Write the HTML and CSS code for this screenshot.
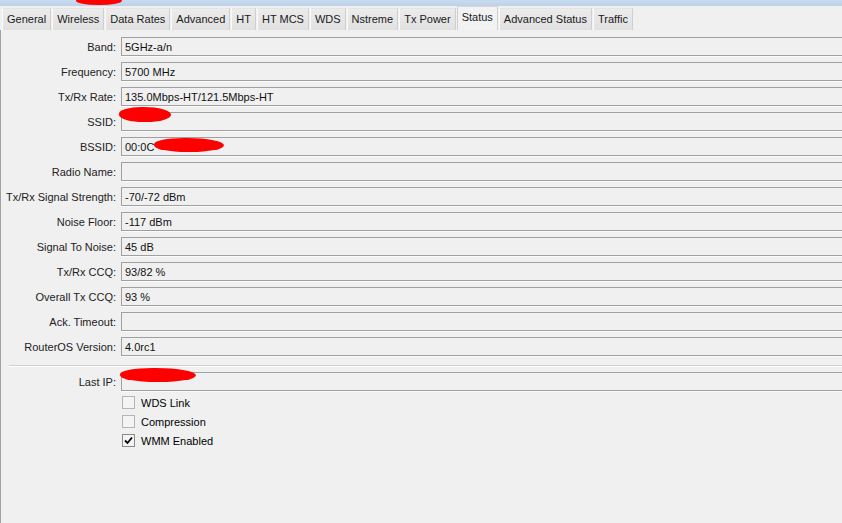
FILE: index.html
```html
<!DOCTYPE html>
<html>
<head>
<meta charset="utf-8">
<link rel="stylesheet" href="styles.css">
</head>
<body>
<div class="topstrip"><span class="blot blot-top"></span></div>
<div class="tabs">
  <div class="tab">General</div>
  <div class="tab">Wireless</div>
  <div class="tab">Data Rates</div>
  <div class="tab">Advanced</div>
  <div class="tab">HT</div>
  <div class="tab">HT MCS</div>
  <div class="tab">WDS</div>
  <div class="tab">Nstreme</div>
  <div class="tab">Tx Power</div>
  <div class="tab active">Status</div>
  <div class="tab">Advanced Status</div>
  <div class="tab">Traffic</div>
</div>
<div class="panel">
  <div class="row"><div class="label">Band:</div><div class="field">5GHz-a/n</div></div>
  <div class="row"><div class="label">Frequency:</div><div class="field">5700 MHz</div></div>
  <div class="row"><div class="label">Tx/Rx Rate:</div><div class="field">135.0Mbps-HT/121.5Mbps-HT</div></div>
  <div class="row"><div class="label">SSID:</div><div class="field"><span class="blot blot-ssid"></span></div></div>
  <div class="row"><div class="label">BSSID:</div><div class="field">00:0C<span class="blot blot-bssid"></span></div></div>
  <div class="row"><div class="label">Radio Name:</div><div class="field"></div></div>
  <div class="row"><div class="label">Tx/Rx Signal Strength:</div><div class="field">-70/-72 dBm</div></div>
  <div class="row"><div class="label">Noise Floor:</div><div class="field">-117 dBm</div></div>
  <div class="row"><div class="label">Signal To Noise:</div><div class="field">45 dB</div></div>
  <div class="row"><div class="label">Tx/Rx CCQ:</div><div class="field">93/82 %</div></div>
  <div class="row"><div class="label">Overall Tx CCQ:</div><div class="field">93 %</div></div>
  <div class="row"><div class="label">Ack. Timeout:</div><div class="field"></div></div>
  <div class="row"><div class="label">RouterOS Version:</div><div class="field">4.0rc1</div></div>
  <div class="separator"></div>
  <div class="row"><div class="label">Last IP:</div><div class="field"><span class="blot blot-ip"></span></div></div>
  <div class="checks">
    <div class="check"><span class="box"></span><span>WDS Link</span></div>
    <div class="check"><span class="box"></span><span>Compression</span></div>
    <div class="check"><span class="box checked"><svg width="9" height="9" viewBox="0 0 9 9"><path d="M1 4.5 L3.5 7 L8 1.5" fill="none" stroke="#000" stroke-width="1.8"/></svg></span><span>WMM Enabled</span></div>
  </div>
</div>
</body>
</html>
```
FILE: styles.css
```css
html, body {
  margin: 0;
  padding: 0;
  height: 100%;
}
body {
  background: #f0f0f0;
  font-family: "Liberation Sans", Arial, sans-serif;
  font-size: 11px;
  color: #000;
  overflow: hidden;
}
.topstrip {
  height: 6px;
  background: linear-gradient(#c9dbee, #bcd2ea);
  position: relative;
}
.blot {
  position: absolute;
  background: #f00;
  border-radius: 45% 55% 50% 50%;
  filter: blur(0.5px);
}
.blot-top {
  left: 76px;
  top: -4px;
  width: 46px;
  height: 9px;
}
.tabs {
  display: flex;
  gap: 1px;
  padding-left: 2px;
  height: 24px;
  background: #f0f0f0;
  align-items: flex-end;
}
.tab {
  height: 21px;
  line-height: 21px;
  padding: 0 4px;
  background: linear-gradient(#ebebeb, #e1e1e1);
  border-left: 1px solid #fafafa;
  border-right: 1px solid #cfcfcf;
  border-top: 1px solid #e4e4e4;
  color: #1a1a1a;
  white-space: nowrap;
}
.active {
  height: 24px;
  line-height: 21px;
  background: #f2f2f2;
  border-left: 1px solid #d0d0d0;
  border-right: 1px solid #d0d0d0;
  border-top: 1px solid #d8d8d8;
  padding: 0 4px 3px;
  box-sizing: border-box;
}
.panel {
  border-left: 1px solid #a0a0a0;
  padding-top: 7px;
  height: 500px;
}
.row {
  display: flex;
  height: 25px;
  align-items: flex-start;
}
.label {
  width: 115px;
  text-align: right;
  padding-right: 5px;
  line-height: 21px;
  color: #222;
  white-space: nowrap;
}
.field {
  flex: 1;
  height: 17px;
  line-height: 18px;
  border: 1px solid #a0a0a0;
  border-right: none;
  box-shadow: 0 1px 0 #fbfbfb;
  padding-left: 3px;
  background: #f0f0f0;
  position: relative;
  color: #111;
}
.blot-ssid {
  left: -3px;
  top: -6px;
  width: 52px;
  height: 15px;
}
.blot-bssid {
  left: 32px;
  top: 0;
  width: 70px;
  height: 14px;
}
.blot-ip {
  left: -2px;
  top: -5px;
  width: 76px;
  height: 14px;
}
.separator {
  margin: 3px 0 5px 8px;
  border-top: 1px solid #d0d0d0;
  border-bottom: 1px solid #fff;
}
.checks {
  display: flex;
  flex-direction: column;
  padding-left: 121px;
  margin-top: -4px;
}
.check {
  display: flex;
  align-items: center;
  height: 19px;
  gap: 6px;
}
.box {
  width: 11px;
  height: 11px;
  border: 1px solid #b5b5b5;
  background: #f4f4f4;
  display: flex;
  align-items: center;
  justify-content: center;
}
.checked {
  border-color: #8a8a8a;
}
```
